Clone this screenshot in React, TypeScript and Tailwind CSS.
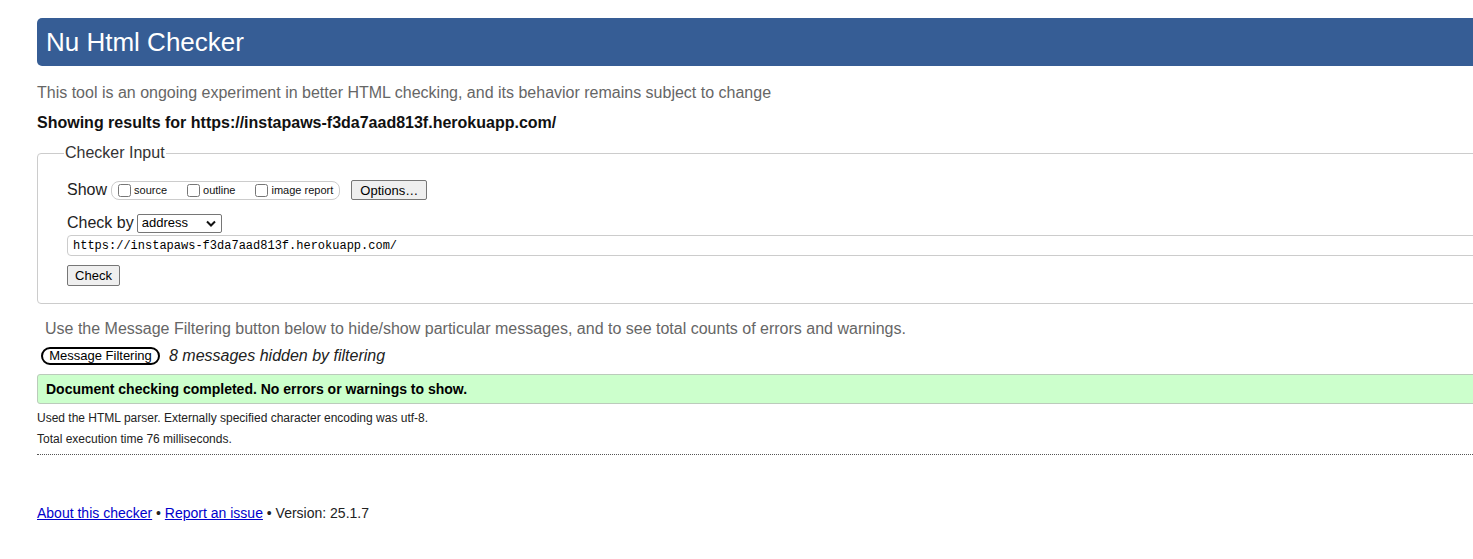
import { useState } from 'react';

const checkedUrl = 'https://instapaws-f3da7aad813f.herokuapp.com/';

const showOptions = [
  { id: 'source', label: 'source' },
  { id: 'outline', label: 'outline' },
  { id: 'image-report', label: 'image report' },
];

function ShowRow() {
  const [checked, setChecked] = useState<Record<string, boolean>>({});
  return (
    <div className="flex h-[20px] items-center">
      <span className="text-[16px] text-[#222]">Show</span>
      <span className="ml-[4px] flex h-[19px] items-center rounded-[8px] border border-[#ccc] pl-[6px] pr-[6px]">
        {showOptions.map((o, i) => (
          <label key={o.id} className={`flex items-center text-[11px] text-[#111] ${i < showOptions.length - 1 ? 'mr-[20px]' : ''}`}>
            <input
              type="checkbox"
              checked={!!checked[o.id]}
              onChange={() => setChecked({ ...checked, [o.id]: !checked[o.id] })}
              className="m-0 mr-[3px] h-[13px] w-[13px]"
            />
            {o.label}
          </label>
        ))}
      </span>
      <button className="ml-[11px] h-[20px] w-[76px] rounded-[2px] border border-[#767676] bg-[#efefef] text-[13px] text-black">
        Options…
      </button>
    </div>
  );
}

export default function App() {
  return (
    <div className="h-[559px] w-full overflow-hidden bg-white font-['Liberation_Sans',Arial,sans-serif] text-[#222]">
      <div className="ml-[37px] w-[1480px] pt-[18px]">
        <h1 className="flex h-[48px] items-center rounded-l-[5px] bg-[#365d95] pl-[9px] text-[26px] text-white">
          Nu Html Checker
        </h1>
        <p className="mt-[17px] text-[16px] leading-[20px] text-[#666]">
          This tool is an ongoing experiment in better HTML checking, and its behavior remains subject to change
        </p>
        <p className="mt-[10px] text-[16px] font-bold leading-[20px] text-[#111]">Showing results for {checkedUrl}</p>

        <fieldset className="mt-[10px] rounded-[4px] border border-[#ccc] pb-[16px]">
          <legend className="ml-[26px] px-[1px] text-[16px] leading-[20px] text-[#333]">Checker Input</legend>
          <div className="pl-[29px]">
            <div className="mt-[17px]">
              <ShowRow />
            </div>
            <div className="mt-[13px] flex h-[20px] items-center">
              <span className="text-[16px] leading-[20px] text-[#222]">Check by</span>
              <span className="ml-[3px] flex h-[19px] w-[85px] items-center justify-between rounded-[2px] border border-[#767676] pl-[4px] pr-[5px] text-[13px] text-black">
                address
                <svg width="10" height="7" viewBox="0 0 10 7" fill="none">
                  <path d="M1 1.5L5 5.5L9 1.5" stroke="#111" strokeWidth="2" />
                </svg>
              </span>
            </div>
            <div className="mt-[2px] flex h-[21px] items-center rounded-l-[4px] border border-[#ccc] pl-[5px] font-['Liberation_Mono','DejaVu_Sans_Mono',monospace] text-[12px] text-black">
              {checkedUrl}
            </div>
            <button className="mt-[9px] h-[21px] w-[53px] rounded-[2px] border border-[#767676] bg-[#efefef] text-[13px] text-black">
              Check
            </button>
          </div>
        </fieldset>

        <p className="ml-[8px] mt-[15px] text-[16px] leading-[20px] text-[#666]">
          Use the Message Filtering button below to hide/show particular messages, and to see total counts of errors and warnings.
        </p>
        <div className="mt-[5px] flex items-center">
          <button className="ml-[4px] h-[18px] w-[119px] rounded-[9px] border-2 border-black bg-white text-[13px] leading-[14px] text-black">
            Message Filtering
          </button>
          <span className="ml-[9px] text-[16px] italic text-[#222]">8 messages hidden by filtering</span>
        </div>

        <div className="mt-[6px] flex h-[30px] items-center rounded-l-[3px] border border-[#bbcbbb] bg-[#ccffcc] pl-[8px] text-[14px] font-bold text-black">
          Document checking completed. No errors or warnings to show.
        </div>
        <p className="mt-[6px] text-[12px] leading-[16px] text-[#222]">
          Used the HTML parser. Externally specified character encoding was utf-8.
        </p>
        <p className="mt-[5px] text-[12px] leading-[16px] text-[#222]">Total execution time 76 milliseconds.</p>
        <div className="mt-[7px] border-b border-dotted border-[#555]" />

        <p className="mt-[49px] text-[14px] leading-[18px] text-[#222]">
          <a href="#about" className="text-[#00c] underline">
            About this checker
          </a>{' '}
          •{' '}
          <a href="#report" className="text-[#00c] underline">
            Report an issue
          </a>{' '}
          • Version: 25.1.7
        </p>
      </div>
    </div>
  );
}
